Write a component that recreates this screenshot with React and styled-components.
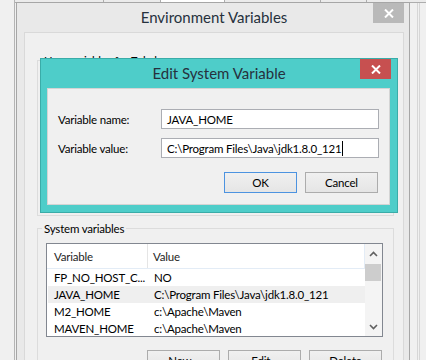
import React from 'react';
import styled, { createGlobalStyle } from 'styled-components';

const GlobalStyle = createGlobalStyle`
  html, body {
    margin: 0;
    padding: 0;
  }
  body {
    width: 426px;
    height: 360px;
    overflow: hidden;
    background: #f0f0f0;
    font-family: Lato, 'Liberation Sans', sans-serif;
    font-size: 11.5px;
    letter-spacing: -0.2px;
    color: #000;
  }
  * {
    box-sizing: border-box;
  }
`;

const tabs = [
  { width: 89 },
  { width: 57 },
  { width: 64, active: true },
  { width: 96 },
  { width: 46 },
  { width: 60 },
];

// the list view truncates the first name itself, with three dots
const systemVars = [
  { name: 'FP_NO_HOST_C...', value: 'NO' },
  { name: 'JAVA_HOME', value: 'C:\\Program Files\\Java\\jdk1.8.0_121', selected: true },
  { name: 'M2_HOME', value: 'c:\\Apache\\Maven' },
  { name: 'MAVEN_HOME', value: 'c:\\Apache\\Maven' },
];

const CloseGlyph = () => (
  <svg width="10" height="9" viewBox="0 0 10 9">
    <path d="M1 0.5 L9 8.5 M9 0.5 L1 8.5" stroke="#fff" strokeWidth="2" fill="none" />
  </svg>
);

const Chevron = ({ up }) => (
  <svg width="9" height="6" viewBox="0 0 9 6">
    <polyline
      points={up ? '1,5 4.5,1.5 8,5' : '1,1 4.5,4.5 8,1'}
      stroke="#606060"
      strokeWidth="1.6"
      fill="none"
    />
  </svg>
);

const App = () => {
  return (
    <>
      <GlobalStyle />
      <Desktop>
        <OuterWindow>
          <TabStrip>
            {tabs.map((t, i) => (
              <Tab key={i} $width={t.width} $active={t.active} />
            ))}
          </TabStrip>
          <OuterBody>
            <EnvWindow>
              <TitleBar>
                <span />
                <WindowTitle>Environment Variables</WindowTitle>
                <CloseButton $color="#b9b9b9">
                  <CloseGlyph />
                </CloseButton>
              </TitleBar>
              <Panel>
                <GroupBox $height={163}>
                  <Legend>User variables for Zekel</Legend>
                </GroupBox>
                <GroupBox $gap={5}>
                  <Legend>System variables</Legend>
                  <ListView>
                    <ListColumns>
                      <HeaderRow>
                        <HeaderCell $first>Variable</HeaderCell>
                        <HeaderCell>Value</HeaderCell>
                      </HeaderRow>
                      {systemVars.map((v) => (
                        <Row key={v.name} $selected={v.selected}>
                          <Cell $first>{v.name}</Cell>
                          <Cell>{v.value}</Cell>
                        </Row>
                      ))}
                    </ListColumns>
                    <ScrollBar>
                      <ScrollArrow>
                        <Chevron up />
                      </ScrollArrow>
                      <Thumb />
                      <ScrollTrack />
                      <ScrollArrow>
                        <Chevron />
                      </ScrollArrow>
                    </ScrollBar>
                  </ListView>
                  <ButtonRow $top={13} $right={1}>
                    <PushButton>New...</PushButton>
                    <PushButton>Edit...</PushButton>
                    <PushButton>Delete</PushButton>
                  </ButtonRow>
                </GroupBox>
              </Panel>
            </EnvWindow>
            <RightGutter>
              <GutterLine />
              <GutterLine />
            </RightGutter>
          </OuterBody>
        </OuterWindow>

        <EditDialog>
          <TitleBar $dialog>
            <span />
            <WindowTitle>Edit System Variable</WindowTitle>
            <CloseButton $color="#c75050">
              <CloseGlyph />
            </CloseButton>
          </TitleBar>
          <DialogBody>
            <FormGrid>
              <FieldLabel>Variable name:</FieldLabel>
              <TextBox>JAVA_HOME</TextBox>
              <FieldLabel>Variable value:</FieldLabel>
              <TextBox>
                C:\Program Files\Java\jdk1.8.0_121
                <Caret />
              </TextBox>
            </FormGrid>
            <ButtonRow $top={14} $right={1}>
              <PushButton $default>OK</PushButton>
              <PushButton>Cancel</PushButton>
            </ButtonRow>
          </DialogBody>
        </EditDialog>
      </Desktop>
    </>
  );
};

const Desktop = styled.div`
  position: relative;
  width: 426px;
  height: 360px;
  overflow: hidden;
  display: flex;
  padding-left: 14px;
  background: #f0f0f0;
`;

const OuterWindow = styled.div`
  flex: 1;
  display: flex;
  flex-direction: column;
  border-left: 1px solid #b4b4b4;
`;

const TabStrip = styled.div`
  display: flex;
  height: 3px;
  border-bottom: 1px solid #d9d9d9;
`;

const Tab = styled.div`
  width: ${(p) => p.$width}px;
  height: ${(p) => (p.$active ? 4 : 3)}px;
  background: ${(p) => (p.$active ? '#ffffff' : '#ebebeb')};
  border-right: 1px solid #adadad;
  border-bottom: ${(p) => (p.$active ? 'none' : '1px solid #adadad')};
`;

const OuterBody = styled.div`
  flex: 1;
  display: flex;
  padding-left: 1px;
`;

const EnvWindow = styled.div`
  width: 394px;
  display: flex;
  flex-direction: column;
  background: #e9e9e9;
  border: 1px solid #a6a6a6;
  border-bottom: none;
  margin-top: -1px;
  padding: 0 5px 0 7px;
`;

const TitleBar = styled.div`
  display: grid;
  grid-template-columns: 1fr auto 1fr;
  align-items: start;
  height: 29px;
  margin-right: ${(p) => (p.$dialog ? -1 : 0)}px;
`;

const WindowTitle = styled.div`
  font-size: 15px;
  letter-spacing: 0;
  line-height: 29px;
  color: #26313d;
  white-space: nowrap;
`;

const CloseButton = styled.div`
  justify-self: end;
  width: 31px;
  height: 20px;
  background: ${(p) => p.$color};
  display: flex;
  align-items: center;
  justify-content: center;
`;

const Panel = styled.div`
  flex: 1;
  background: #f0f0f0;
  border: 1px solid #d9d9d9;
  border-bottom: none;
  padding: 20px 9px 0 12px;
`;

const GroupBox = styled.fieldset`
  margin: ${(p) => p.$gap || 0}px 0 0 0;
  padding: 0 10px 0 8px;
  border: 1px solid #dcdcdc;
  height: ${(p) => (p.$height ? `${p.$height}px` : 'auto')};
  min-width: 0;
`;

const Legend = styled.legend`
  margin-left: -4px;
  padding: 0 2px;
  line-height: 15px;
  color: #000;
`;

const ListView = styled.div`
  margin-top: 7px;
  height: 94px;
  display: grid;
  grid-template-columns: 1fr 17px;
  border: 1px solid #828790;
  background: #fff;
  overflow: hidden;
`;

const ListColumns = styled.div`
  display: flex;
  flex-direction: column;
  min-width: 0;
`;

const HeaderRow = styled.div`
  display: grid;
  grid-template-columns: 101px 1fr;
  height: 25px;
  border-bottom: 1px solid #e3ecf6;
  border-right: 1px solid #e3ecf6;
`;

const HeaderCell = styled.div`
  display: flex;
  align-items: center;
  padding-left: ${(p) => (p.$first ? 7 : 5)}px;
  border-right: ${(p) => (p.$first ? '1px solid #e5e5e5' : 'none')};
  color: #1e1e1e;
`;

const Row = styled.div`
  display: grid;
  grid-template-columns: 101px 1fr;
  height: 17px;
  margin: 0 0 0 1px;
  background: ${(p) => (p.$selected ? '#efefef' : 'transparent')};
`;

const Cell = styled.div`
  padding-left: ${(p) => (p.$first ? 6 : 5)}px;
  line-height: 17px;
  white-space: nowrap;
  overflow: hidden;
  color: #000;
`;

const ScrollBar = styled.div`
  display: flex;
  flex-direction: column;
  background: #f4f4f4;
`;

const ScrollArrow = styled.div`
  height: 20px;
  display: flex;
  align-items: center;
  justify-content: center;
`;

const Thumb = styled.div`
  height: 17px;
  margin: 0 1px 0 0;
  background: #cdcdcd;
`;

const ScrollTrack = styled.div`
  flex: 1;
`;

const ButtonRow = styled.div`
  display: flex;
  justify-content: flex-end;
  gap: 8px;
  margin-top: ${(p) => p.$top}px;
  margin-right: ${(p) => p.$right || 0}px;
`;

const PushButton = styled.div`
  width: 73px;
  height: 21px;
  display: flex;
  align-items: center;
  justify-content: center;
  border: 1px solid ${(p) => (p.$default ? '#4c93e0' : '#acacac')};
  background: linear-gradient(#f0f0f0, #e5e5e5);
  color: #000;
`;

const RightGutter = styled.div`
  flex: 1;
  display: flex;
  gap: 1px;
  padding-left: 7px;
`;

const GutterLine = styled.div`
  width: 1px;
  background: #d6d6d6;
`;

const EditDialog = styled.div`
  position: absolute;
  left: 40px;
  top: 58px;
  width: 358px;
  height: 155px;
  display: flex;
  flex-direction: column;
  background: #4ecdc9;
  border: 1px solid #3aaca8;
  padding: 0 7px 7px 6px;
`;

const DialogBody = styled.div`
  flex: 1;
  background: #f0f0f0;
  border: 1px solid #d4d4d4;
  padding: 20px 10px 0 10px;
`;

const FormGrid = styled.div`
  display: grid;
  grid-template-columns: 103px 218px;
  row-gap: 9px;
  align-items: center;
`;

const FieldLabel = styled.div`
  color: #000;
`;

const TextBox = styled.div`
  height: 20px;
  display: flex;
  align-items: center;
  padding-left: 5px;
  border: 1px solid #abadb3;
  background: #fff;
  white-space: nowrap;
`;

const Caret = styled.span`
  display: inline-block;
  width: 1px;
  height: 15px;
  margin-left: 1px;
  background: #000;
`;

export default App;
